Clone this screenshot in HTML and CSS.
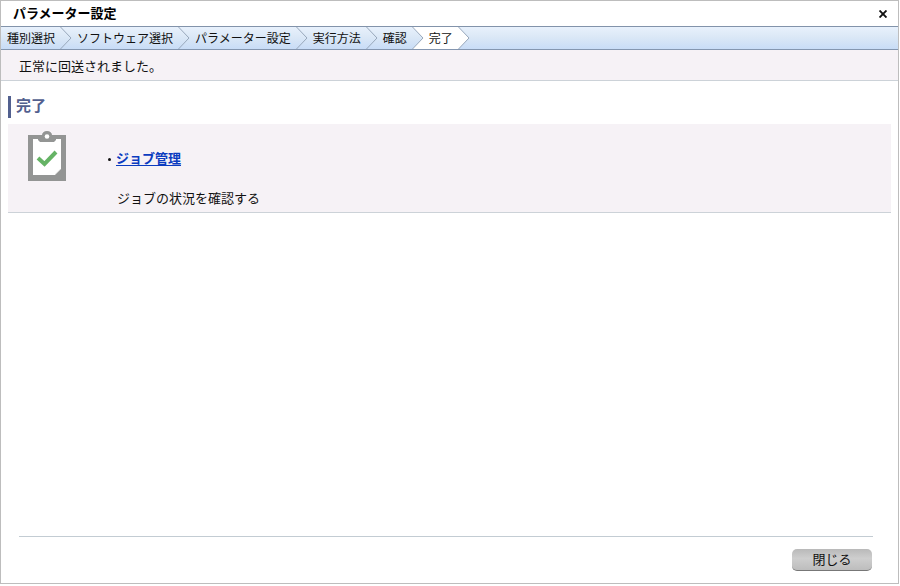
FILE: index.html
```html
<!DOCTYPE html>
<html lang="ja">
<head>
<meta charset="utf-8">
<title>パラメーター設定</title>
<link rel="stylesheet" href="styles.css">
</head>
<body>
<main class="dialog">
  <header class="titlebar">
    <h1 class="title">パラメーター設定</h1>
    <button class="close" type="button" aria-label="閉じる">
      <svg width="8" height="8" viewBox="0 0 8 8" aria-hidden="true"><path d="M.5.5 7.500 7.500M7.500.5.5 7.500" stroke="#111" stroke-width="1.900"/></svg>
    </button>
  </header>
  <nav>
    <ol class="steps">
      <li class="step">種別選択</li>
      <li class="sep" aria-hidden="true"><svg width="12" height="22" viewBox="0 0 12 22"><path class="line" d="M.5 0 11 11 .5 22"/></svg></li>
      <li class="step">ソフトウェア選択</li>
      <li class="sep" aria-hidden="true"><svg width="12" height="22" viewBox="0 0 12 22"><path class="line" d="M.5 0 11 11 .5 22"/></svg></li>
      <li class="step">パラメーター設定</li>
      <li class="sep" aria-hidden="true"><svg width="12" height="22" viewBox="0 0 12 22"><path class="line" d="M.5 0 11 11 .5 22"/></svg></li>
      <li class="step">実行方法</li>
      <li class="sep" aria-hidden="true"><svg width="12" height="22" viewBox="0 0 12 22"><path class="line" d="M.5 0 11 11 .5 22"/></svg></li>
      <li class="step">確認</li>
      <li class="sep enter" aria-hidden="true"><svg width="12" height="22" viewBox="0 0 12 22"><path class="fill" d="M.5 0H12V22H.5L11 11Z"/><path class="line" d="M.5 0 11 11 .5 22"/></svg></li>
      <li class="step current" aria-current="step">完了</li>
      <li class="sep leave" aria-hidden="true"><svg width="12" height="22" viewBox="0 0 12 22"><path class="fill" d="M0 0H.5L11 11 .5 22H0Z"/><path class="line" d="M.5 0 11 11 .5 22"/></svg></li>
    </ol>
  </nav>
  <p class="message">正常に回送されました。</p>
  <section class="content">
    <h2 class="heading">完了</h2>
    <div class="panel">
      <svg class="icon" width="38" height="50" viewBox="0 0 38 50" aria-hidden="true">
        <path fill="#939594" d="M0 4H14C14 2 16 0 19 0S24 2 24 4H38V50H0Z"/>
        <path fill="#fff" d="M5 8H10V9L12 11H26L28 9V8H33V38L27 44H5Z"/>
        <path fill="#a9abaa" d="M33 38 27 44V38Z"/>
        <path fill="#fff" d="M27 37.500H33L27 43.500Z"/>
        <circle cx="19" cy="5.500" r="2.300" fill="#fff"/>
        <path d="M10 27 16.500 33 28 21" fill="none" stroke="#65b365" stroke-width="4"/>
      </svg>
      <ul class="links">
        <li>
          <a class="link" href="#jobs">ジョブ管理</a>
          <p class="note">ジョブの状況を確認する</p>
        </li>
      </ul>
    </div>
  </section>
  <footer class="footer">
    <button class="button" type="button">閉じる</button>
  </footer>
</main>
</body>
</html>
```
FILE: styles.css
```css
* {
  box-sizing: border-box;
}

body {
  margin: 0;
  min-height: 100vh;
  padding: 0 1px 2px 0;
  display: flex;
  background: #fff;
  color: #111;
  font: 13px/20px "Noto Sans CJK JP", sans-serif;
}

h1, h2, p, ol, ul {
  margin: 0;
  padding: 0;
  list-style: none;
}

.dialog {
  flex: 1;
  display: flex;
  flex-direction: column;
  border: 1px solid #bdbdbd;
}

.titlebar {
  display: flex;
  align-items: center;
  justify-content: space-between;
  height: 25px;
  padding: 0 8px 0 12px;
}

.title {
  padding-bottom: 2px;
  font-size: 13px;
  font-weight: 700;
  color: #000;
}

.close {
  display: flex;
  padding: 3px;
  border: 0;
  background: none;
}

.steps {
  display: flex;
  padding-left: 6px;
  border-top: 1px solid #8293aa;
  border-bottom: 1px solid #8496b0;
  background: linear-gradient(#e8f1fc, #dbe8f6 45%, #c8dcf7);
  font-size: 12px;
  line-height: 22px;
}

.sep {
  display: flex;
  padding: 0 5px;
}

.line {
  fill: none;
  stroke: #98a8bb;
}

.fill {
  fill: #fff;
}

.enter {
  padding-right: 0;
}

.current {
  padding: 0 5px;
  background: #fff;
}

.leave {
  padding: 0;
}

.message {
  padding: 6px 18px 4px;
  border-bottom: 1px solid #ccd2d8;
  background: #f6f2f6;
}

.content {
  flex: 1;
  padding: 15px 7px;
}

.heading {
  height: 22px;
  padding-left: 5px;
  border-left: 3px solid #52608f;
  color: #52608f;
  font-size: 15px;
  line-height: 18px;
}

.panel {
  display: flex;
  margin-top: 6px;
  padding: 7px 20px 4px;
  border-bottom: 1px solid #ccd2d8;
  background: #f6f2f6;
}

.links {
  margin-left: 50px;
  padding-top: 17px;
}

.links li::before {
  content: "";
  position: absolute;
  width: 3px;
  height: 3px;
  margin: 10px 0 0 -8px;
  border-radius: 50%;
  background: #111;
}

.link {
  color: #0b3cc0;
  font-weight: 700;
  text-underline-offset: 2px;
}

.note {
  padding-left: 1px;
  margin-top: 20px;
}

.footer {
  display: flex;
  justify-content: flex-end;
  margin: 0 25px 12px 18px;
  padding: 12px 1px 0;
  border-top: 1px solid #c3ccd3;
}

.button {
  width: 80px;
  height: 22px;
  padding: 0 0 3px;
  border: 0;
  border-bottom: 1px solid #777;
  border-radius: 5px;
  background: linear-gradient(#b9b9b9, #cecece 45%, #bdbdbd);
  color: #111;
  font: inherit;
}
```
